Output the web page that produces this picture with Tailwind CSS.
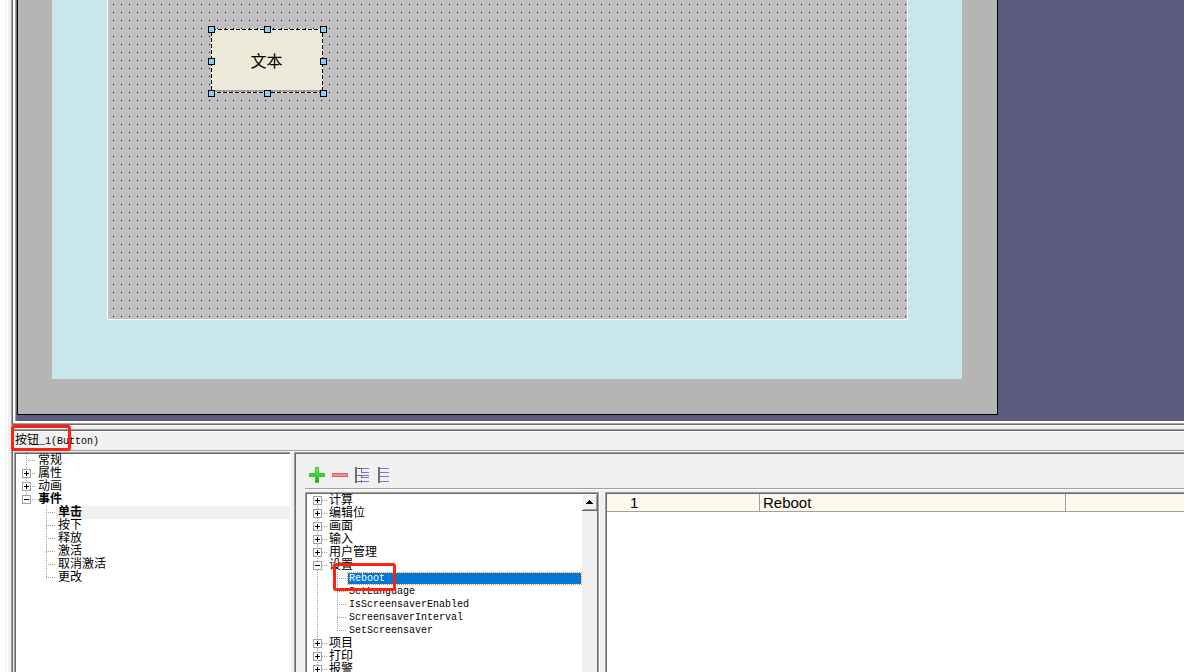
<!DOCTYPE html>
<html lang="zh-CN">
<head>
<meta charset="utf-8">
<title>按钮_1(Button)</title>
<script src="https://cdn.jsdelivr.net/npm/@tailwindcss/browser@4"></script>
</head>
<body class="h-screen overflow-hidden bg-white text-black text-[12px] leading-[13px] font-['Liberation_Mono','Noto_Sans_CJK_SC',monospace]">
<div class="flex h-full">
  <div class="w-[5px] shrink-0 bg-white"></div>
  <div class="w-px shrink-0 bg-[#eeeeee]"></div>
  <div class="w-[2px] shrink-0 bg-white"></div>
  <div class="w-[3px] shrink-0 bg-[#f0f0f0]"></div>
  <div class="relative flex min-w-0 flex-1 flex-col bg-[#f0f0f0]">

    <!-- Design workspace -->
    <section class="shrink-0 border-l border-b border-l-[#a0a0a0] border-b-white">
      <div class="border-l border-b border-[#696969] bg-white">
        <div class="border-b border-[#a0a0a0] pl-[2px] pb-[2px]">
          <div class="border-l border-[#a0a0a0]">
            <div class="flex border-l border-[#696969] bg-[#5c5c80] pb-[6px]">
              <div class="border border-t-0 border-black bg-[#b5b5b3] pl-[34px] pr-[35px] pb-[35px]">
                <div class="bg-[#c9e6ea] pl-[55px] pr-[54px] pb-[59px]">
                  <div class="relative h-[320px] w-[801px] border border-t-0 border-white bg-[#c0c0c0]">
                    <svg class="block h-full w-full" aria-hidden="true">
                      <defs><pattern id="grid" x="5" y="4" width="8" height="8" patternUnits="userSpaceOnUse"><rect width="1" height="1" fill="#000"/></pattern></defs>
                      <rect width="100%" height="100%" fill="url(#grid)"/>
                    </svg>
                    <div class="absolute left-[100px] top-[26px] h-[71px] w-[119px]">
                      <button type="button" class="absolute inset-[3px] flex items-center justify-center border-r-2 border-b-4 border-[#a0a0a0] border-b-[#a0a0a0] bg-[#ece9d8] font-['Noto_Sans_CJK_SC',sans-serif] text-[16px] leading-[20px]">文本</button>
                      <svg class="absolute inset-0" width="119" height="71" shape-rendering="crispEdges" aria-hidden="true">
                        <path d="M3 67.500H115M115.500 3V68" stroke="#c0c0c0"/>
                        <path d="M4 65.500H114" stroke="#a0a0a0"/>
                        <rect x="3.5" y="3.5" width="111" height="63" fill="none" stroke="#fff"/>
                        <rect x="3.5" y="3.5" width="111" height="63" fill="none" stroke="#000" stroke-dasharray="4 2"/>
                        <g fill="#87cefa" stroke="#000">
                          <rect x=".5" y=".5" width="6" height="6"/><rect x="56.5" y=".5" width="6" height="6"/><rect x="112.5" y=".5" width="6" height="6"/>
                          <rect x=".5" y="32.5" width="6" height="6"/><rect x="112.5" y="32.5" width="6" height="6"/>
                          <rect x=".5" y="64.5" width="6" height="6"/><rect x="56.5" y="64.5" width="6" height="6"/><rect x="112.5" y="64.5" width="6" height="6"/>
                        </g>
                      </svg>
                    </div>
                  </div>
                </div>
              </div>
            </div>
          </div>
        </div>
      </div>
    </section>

    <div class="h-[3px] shrink-0"></div>

    <!-- Property window -->
    <section class="flex min-h-0 flex-1 border-t border-l border-[#a0a0a0]">
      <div class="flex min-h-0 min-w-0 flex-1 flex-col border-t border-l border-[#696969]">
        <h1 class="flex h-5 shrink-0 items-center border-t border-b border-t-white border-b-[#a0a0a0] pl-[2px] text-[10px]"><span class="text-[12px]">按钮</span>_1(Button)</h1>
        <div class="mt-px flex min-h-0 flex-1">
          <nav aria-label="属性" class="ml-px w-[276px] shrink-0 overflow-hidden border-t border-l border-[#a0a0a0]">
            <div class="relative h-full border-t border-l border-[#696969] bg-white">
              <svg class="absolute left-px top-0" width="60" height="140" shape-rendering="crispEdges" aria-hidden="true">
                <g stroke="#a0a0a0" stroke-dasharray="1 1" fill="none">
                  <path d="M9.500 0V45M9 6.500H19M15 19.500H19M15 32.500H19M15 45.500H19M29.500 52V124M29 58.500H39M29 71.500H39M29 84.500H39M29 97.500H39M29 110.500H39M29 123.500H39"/>
                </g>
                <g fill="#fff" stroke="#a0a0a0"><rect x="5.500" y="15.500" width="8" height="8"/><rect x="5.500" y="28.500" width="8" height="8"/><rect x="5.500" y="41.500" width="8" height="8"/></g>
                <path stroke="#000" d="M7 19.500H12M9.500 17V22M7 32.500H12M9.500 30V35M7 45.500H12"/>
              </svg>
              <ul class="relative leading-[15px]">
                <li class="h-[13px] pl-[22px]">常规</li>
                <li class="h-[13px] pl-[22px]">属性</li>
                <li class="h-[13px] pl-[22px]">动画</li>
                <li class="pl-[22px]"><div class="h-[13px] font-bold">事件</div>
                  <ul class="pl-[18px]">
                    <li class="h-[13px] bg-[#f0f0f0] pl-[2px] font-bold">单击</li>
                    <li class="h-[13px] pl-[2px]">按下</li>
                    <li class="h-[13px] pl-[2px]">释放</li>
                    <li class="h-[13px] pl-[2px]">激活</li>
                    <li class="h-[13px] pl-[2px]">取消激活</li>
                    <li class="h-[13px] pl-[2px]">更改</li>
                  </ul>
                </li>
              </ul>
            </div>
          </nav>
          <div class="w-[4px] shrink-0 border-l border-white"></div>
          <div class="flex min-w-0 flex-1 border-t border-l border-[#a0a0a0]">
            <div class="flex min-w-0 flex-1 flex-col border-t border-l border-[#696969] pl-[9px]">
              <div class="flex h-[34px] shrink-0 pt-[13px] pl-1">
                <button type="button" aria-label="添加" class="h-4 w-4"><svg width="16" height="16" viewBox="0 0 16 16"><defs><linearGradient id="g" x2="0" y2="1"><stop stop-color="#8ff27c"/><stop offset="1" stop-color="#06a80a"/></linearGradient></defs><path d="M6.500 .5h3v6h6v3h-6v6h-3v-6h-6v-3h6z" fill="url(#g)" stroke="#2cc42c"/></svg></button>
                <button type="button" aria-label="删除" class="ml-[7px] h-4 w-4"><svg width="16" height="16"><rect x=".5" y="6.500" width="15" height="3" fill="#f48a8a" stroke="#d76466"/></svg></button>
                <button type="button" aria-label="全部展开" class="ml-[7px] h-4 w-4"><svg width="16" height="16" shape-rendering="crispEdges"><path d="M0 0h2v16H0z" fill="#707070"/><path d="M2 1.500h5M6.500 1V6M6 5.500h3M2 8.500h5M6.500 8V11M6 10.500h3M2 14.500h5M6.500 13v3" stroke="#707070"/><path d="M7 1.500h7M8 5.500h6M7 8.500h7M8 10.500h6M7 14.500h7" stroke="#7676d8"/></svg></button>
                <button type="button" aria-label="全部折叠" class="ml-[7px] h-4 w-4"><svg width="16" height="16" shape-rendering="crispEdges"><path d="M0 0h2v16H0z" fill="#707070"/><path d="M2 1.500h9M2 5.500h9M2 9.500h9M2 14.500h9" stroke="#7676d8"/></svg></button>
              </div>
              <div class="h-[2px] shrink-0 border-t border-b border-t-[#a0a0a0] border-b-white"></div>
              <div class="mt-[2px] flex min-h-0 flex-1">
                <div class="w-[294px] shrink-0 overflow-hidden border-t border-l border-r border-[#a0a0a0]">
                  <div class="relative flex h-full border-t border-l border-r border-[#696969] bg-white">
                    <svg class="absolute left-0 top-0" width="60" height="182" shape-rendering="crispEdges" aria-hidden="true">
                      <g stroke="#a0a0a0" stroke-dasharray="1 1"><path d="M10.500 6V182M15 6.500H20M15 19.500H20M15 32.500H20M15 45.500H20M15 58.500H20M15 71.500H20M15 149.500H20M15 162.500H20M15 175.500H20M30.500 78V137M30 84.500H40M30 97.500H40M30 110.500H40M30 123.500H40M30 136.500H40"/></g>
                      <g fill="#fff" stroke="#a0a0a0"><rect x="6.500" y="2.500" width="8" height="8"/><rect x="6.500" y="15.500" width="8" height="8"/><rect x="6.500" y="28.500" width="8" height="8"/><rect x="6.500" y="41.500" width="8" height="8"/><rect x="6.500" y="54.500" width="8" height="8"/><rect x="6.500" y="67.500" width="8" height="8"/><rect x="6.500" y="145.500" width="8" height="8"/><rect x="6.500" y="158.500" width="8" height="8"/><rect x="6.500" y="171.500" width="8" height="8"/></g>
                      <path stroke="#000" d="M8 6.500h5M10.500 4v5M8 19.500h5M10.500 17v5M8 32.500h5M10.500 30v5M8 45.500h5M10.500 43v5M8 58.500h5M10.500 56v5M8 71.500h5M8 149.500h5M10.500 147v5M8 162.500h5M10.500 160v5M8 175.500h5M10.500 173v5"/>
                    </svg>
                    <ul class="relative min-w-0 flex-1 pl-[22px] leading-[15px]">
                      <li class="h-[13px]">计算</li>
                      <li class="h-[13px]">编辑位</li>
                      <li class="h-[13px]">画面</li>
                      <li class="h-[13px]">输入</li>
                      <li class="h-[13px]">用户管理</li>
                      <li><div class="h-[13px]">设置</div>
                        <ul class="relative pl-[18px] text-[10px] leading-[13px]">
                          <li class="h-[13px] border border-dotted border-[#ff8728] bg-[#0078d7] bg-clip-padding pl-px leading-[11px] text-white">Reboot</li>
                          <li class="h-[13px] pl-[2px]">SetLanguage</li>
                          <li class="h-[13px] pl-[2px]">IsScreensaverEnabled</li>
                          <li class="h-[13px] pl-[2px]">ScreensaverInterval</li>
                          <li class="h-[13px] pl-[2px]">SetScreensaver</li>
                          <li class="pointer-events-none absolute left-1 -top-[9px] h-7 w-[63px] rounded-[3px] border-3 border-[#ff2010]" aria-hidden="true"></li>
                        </ul>
                      </li>
                      <li class="h-[13px]">项目</li>
                      <li class="h-[13px]">打印</li>
                      <li class="h-[13px]">报警</li>
                    </ul>
                    <div class="w-[15px] shrink-0 bg-[#f0f0f0]">
                      <button type="button" aria-label="向上滚动" class="flex h-[17px] w-full items-center justify-center border-b border-[#696969] shadow-[inset_1px_1px_0_#fff,inset_-1px_-1px_0_#a0a0a0]"><svg width="7" height="4" shape-rendering="crispEdges"><path d="M3 0h1v1h1v1h1v1h1v1H0V3h1V2h1V1h1z"/></svg></button>
                    </div>
                  </div>
                </div>
                <div class="w-[6px] shrink-0 border-l border-white"></div>
                <div class="min-w-0 flex-1 overflow-hidden border-t border-l border-[#a0a0a0]">
                  <div class="h-full border-t border-l border-[#696969] bg-white">
                    <table class="w-full table-fixed border-separate border-spacing-0 font-['Liberation_Sans',sans-serif] text-[15px] leading-[17px]">
                      <tbody><tr class="bg-[#fef9ed]">
                        <td class="h-[18px] w-[153px] border-r border-b border-[#a0a0a0] p-0 pl-[23px]">1</td>
                        <td class="w-[306px] border-r border-b border-[#a0a0a0] p-0 pl-[3px]">Reboot</td>
                        <td class="border-b border-[#a0a0a0] p-0"></td>
                      </tr></tbody>
                    </table>
                  </div>
                </div>
              </div>
            </div>
          </div>
        </div>
      </div>
    </section>

    <!-- Highlight around the object name -->
    <div class="pointer-events-none absolute left-0 top-[425px] h-[26px] w-[60px] rounded-[3px] border-3 border-[#ff2010]" aria-hidden="true"></div>
  </div>
</div>
</body>
</html>
